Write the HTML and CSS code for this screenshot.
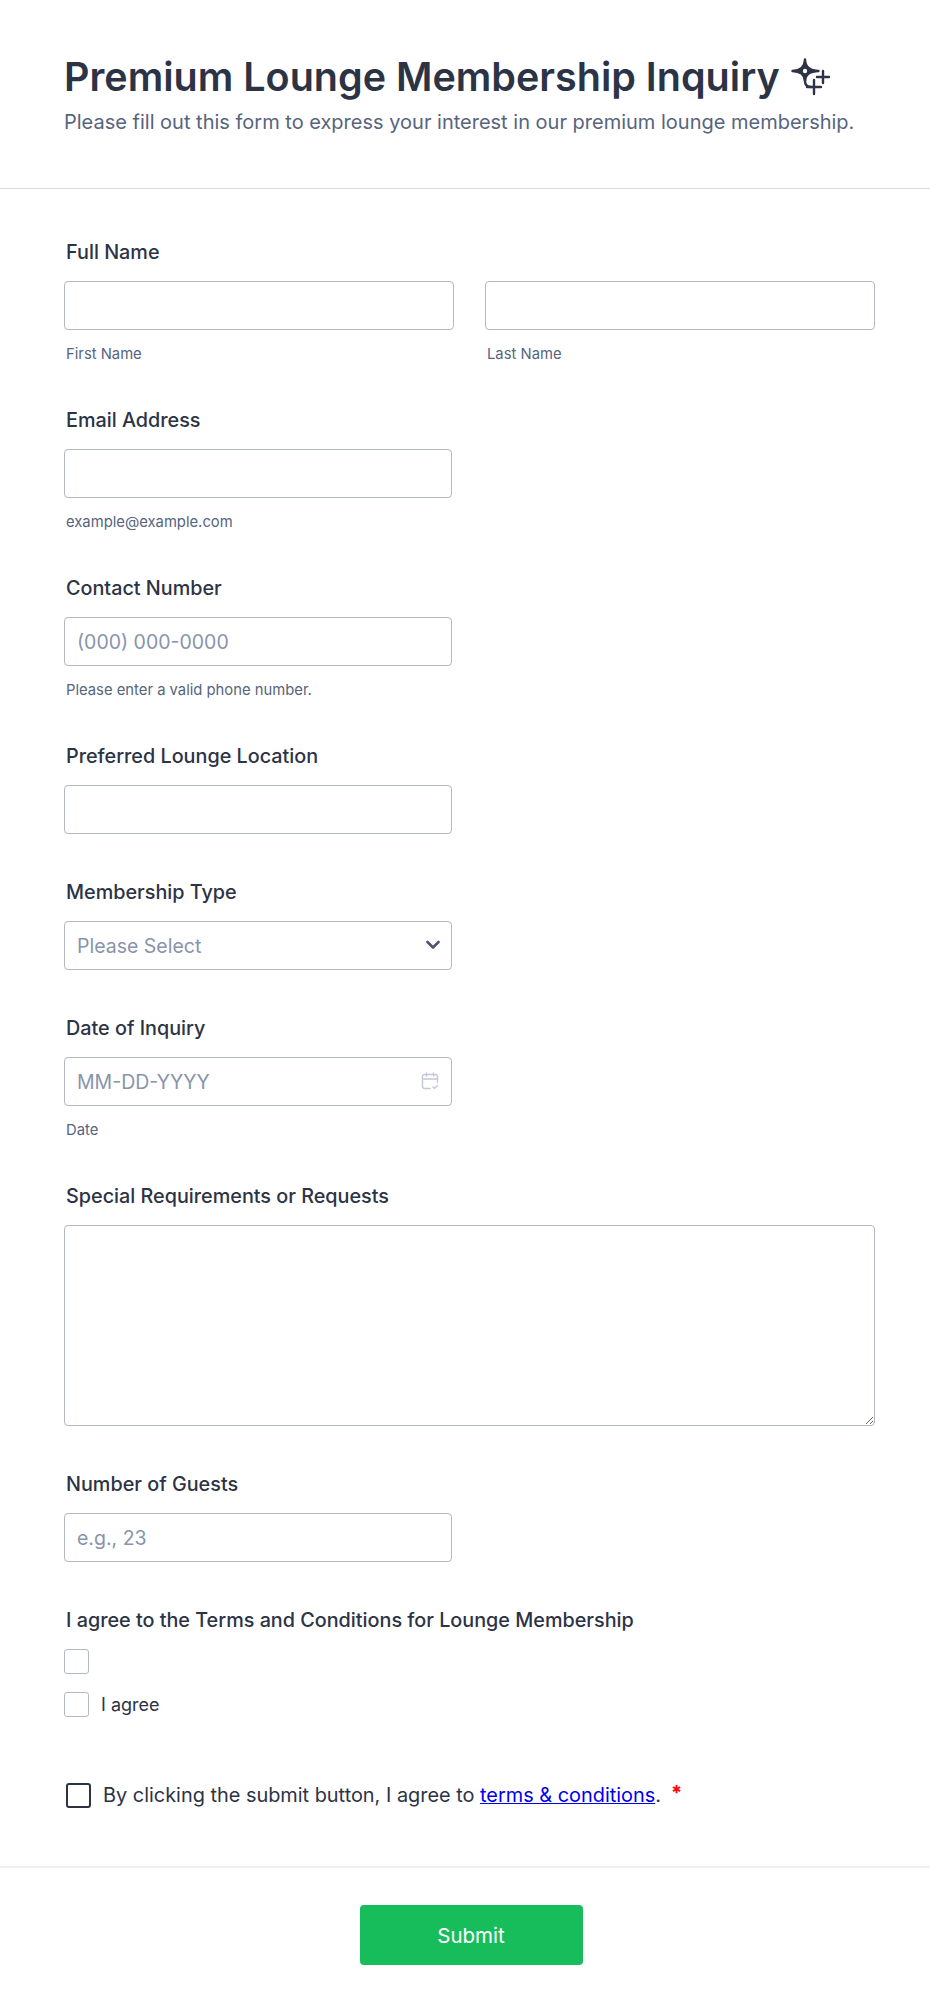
FILE: index.html
```html
<!DOCTYPE html>
<html>
<head>
    <title>Premium Lounge Membership Inquiry</title>
    <link rel="stylesheet" href="styles.css">
</head>
<body>
    <form class="form">
        <header class="form-header">
            <h1>Premium Lounge Membership Inquiry
                <svg class="sparkle" viewBox="0 0 40 40" width="40" height="40" fill="none" stroke="#2c3345" stroke-width="2.4" stroke-linecap="round" stroke-linejoin="round">
                    <path fill="#2c3345" d="M14 2.500Q14.300 13.700 27.500 14Q14.300 14.300 14 24Q13.700 14.300 1.500 14Q13.700 13.700 14 2.500Z"/>
                    <circle cx="14" cy="14" r="2.200" fill="#fff" stroke="none"/>
                    <path d="M14 20v4c0 4 2 6 6 6"/>
                    <path d="M16 30h14M23 23v14"/>
                    <path d="M26 20h12M32 14v12"/>
                </svg>
            </h1>
            <p>Please fill out this form to express your interest in our premium lounge membership.</p>
        </header>

        <div class="form-body">
            <div class="field">
                <label class="field-label">Full Name</label>
                <div class="name-row">
                    <div>
                        <input type="text" class="input">
                        <div class="sublabel">First Name</div>
                    </div>
                    <div>
                        <input type="text" class="input">
                        <div class="sublabel">Last Name</div>
                    </div>
                </div>
            </div>

            <div class="field">
                <label class="field-label">Email Address</label>
                <input type="text" class="input half">
                <div class="sublabel">example@example.com</div>
            </div>

            <div class="field">
                <label class="field-label">Contact Number</label>
                <input type="text" class="input half" placeholder="(000) 000-0000">
                <div class="sublabel">Please enter a valid phone number.</div>
            </div>

            <div class="field">
                <label class="field-label">Preferred Lounge Location</label>
                <input type="text" class="input half">
            </div>

            <div class="field">
                <label class="field-label">Membership Type</label>
                <div class="input-wrap half">
                    <select class="input select">
                        <option>Please Select</option>
                    </select>
                    <svg class="input-icon" viewBox="0 0 14 10" width="14" height="10" fill="none" stroke="#4c5670" stroke-width="2.6" stroke-linecap="round" stroke-linejoin="round">
                        <path d="M1.500 2l5.500 5.500 5.500-5.500"/>
                    </svg>
                </div>
            </div>

            <div class="field">
                <label class="field-label">Date of Inquiry</label>
                <div class="input-wrap half">
                    <input type="text" class="input" placeholder="MM-DD-YYYY">
                    <svg class="input-icon calendar" viewBox="0 0 18 18" width="18" height="18" fill="none" stroke="#c3c7d6" stroke-width="1.4" stroke-linecap="round" stroke-linejoin="round">
                        <path d="M9 16.500H3.500a2 2 0 0 1-2-2V4.500a2 2 0 0 1 2-2h11a2 2 0 0 1 2 2V10"/>
                        <path d="M1.500 7h15M5.500 1v3M12.500 1v3M12 15l1.500 1.500 3-3"/>
                    </svg>
                </div>
                <div class="sublabel">Date</div>
            </div>

            <div class="field">
                <label class="field-label">Special Requirements or Requests</label>
                <textarea class="input textarea"></textarea>
            </div>

            <div class="field">
                <label class="field-label">Number of Guests</label>
                <input type="text" class="input half" placeholder="e.g., 23">
            </div>

            <div class="field">
                <label class="field-label">I agree to the Terms and Conditions for Lounge Membership</label>
                <div class="check-row"><input type="checkbox" class="check"></div>
                <div class="check-row"><input type="checkbox" class="check"><span>I agree</span></div>
            </div>

            <div class="terms">
                <input type="checkbox" class="check dark">
                <span>By clicking the submit button, I agree to <a href="#">terms &amp; conditions</a>.</span>
                <span class="required">*</span>
            </div>
        </div>

        <footer class="form-footer">
            <button type="button" class="submit">Submit</button>
        </footer>
    </form>
</body>
</html>
```

FILE: styles.css
```css
:root {
    --text: #2c3345;
    --muted: #57647e;
    --border: #b3b7c9;
    --placeholder: #8894ab;
}

* {
    box-sizing: border-box;
}

body {
    margin: 0;
    background: #fff;
    color: var(--text);
    font-family: Inter, sans-serif;
}

.form-header {
    height: 189px;
    padding: 52px 64px 0;
    border-bottom: 1px solid #d9dbe7;
}

h1 {
    display: flex;
    align-items: center;
    gap: 11px;
    margin: 0;
    font-size: 39.5px;
    line-height: 50px;
    font-weight: 600;
}

.sparkle {
    flex: none;
}

.form-header p {
    margin: 6px 0 0;
    font-size: 20px;
    line-height: 28px;
    color: var(--muted);
}

.form-body {
    padding: 52px 55px 0 64px;
}

.field {
    margin-bottom: 47px;
}

.field-label {
    display: block;
    margin: 0 0 18px 2px;
    font-size: 19.8px;
    line-height: 22px;
    font-weight: 500;
}

.name-row {
    display: grid;
    grid-template-columns: 390px 390px;
    gap: 31px;
}

.input {
    display: block;
    width: 100%;
    height: 49px;
    padding: 0 12px;
    border: 1px solid var(--border);
    border-radius: 4px;
    background: #fff;
    color: var(--text);
    font-family: Inter, sans-serif;
    font-size: 19.5px;
}

.input::placeholder {
    color: var(--placeholder);
}

.half {
    width: 388px;
}

.input-wrap {
    position: relative;
}

.select {
    appearance: none;
    color: var(--placeholder);
}

.input-icon {
    position: absolute;
    right: 12px;
    top: 19px;
}

.calendar {
    top: 15px;
    right: 13px;
}

.textarea {
    height: 201px;
    resize: vertical;
}

.sublabel {
    margin: 16px 0 0 2px;
    font-size: 14.8px;
    line-height: 16px;
    color: var(--muted);
}

.check-row {
    display: flex;
    align-items: center;
    gap: 12px;
    height: 25px;
    margin-bottom: 18px;
    font-size: 18px;
}

.check {
    appearance: none;
    flex: none;
    width: 25px;
    height: 25px;
    margin: 0;
    border: 1px solid var(--border);
    border-radius: 3px;
    background: #fff;
}

.terms {
    display: flex;
    align-items: center;
    gap: 12px;
    margin: 66px 0 58px 2px;
    font-size: 19.9px;
    line-height: 25px;
}

.terms a {
    color: #0000ee;
}

.check.dark {
    border: 2px solid #2c3345;
}

.required {
    margin: -5px 0 0 -2px;
    color: #f00;
    font-weight: 700;
}

.form-footer {
    display: flex;
    justify-content: center;
    padding: 37px 0 0 12px;
    border-top: 2px solid #edf0f4;
}

.submit {
    width: 223px;
    height: 60px;
    border: 0;
    border-radius: 4px;
    background: #18bd5b;
    color: #fff;
    font-family: Inter, sans-serif;
    font-size: 20.5px;
    font-weight: 400;
}
```
